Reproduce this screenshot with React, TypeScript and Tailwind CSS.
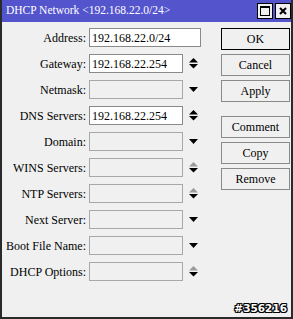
import React from 'react'

type Arrow = 'both' | 'down' | 'dimmed' | 'none'

interface Field {
  label: string
  value?: string
  enabled: boolean
  arrow: Arrow
  wide?: boolean
}

const fields: Field[] = [
  { label: 'Address:', value: '192.168.22.0/24', enabled: true, arrow: 'none', wide: true },
  { label: 'Gateway:', value: '192.168.22.254', enabled: true, arrow: 'both' },
  { label: 'Netmask:', enabled: false, arrow: 'down' },
  { label: 'DNS Servers:', value: '192.168.22.254', enabled: true, arrow: 'both' },
  { label: 'Domain:', enabled: false, arrow: 'down' },
  { label: 'WINS Servers:', enabled: false, arrow: 'dimmed' },
  { label: 'NTP Servers:', enabled: false, arrow: 'dimmed' },
  { label: 'Next Server:', enabled: false, arrow: 'down' },
  { label: 'Boot File Name:', enabled: false, arrow: 'down' },
  { label: 'DHCP Options:', enabled: false, arrow: 'dimmed' },
]

function ArrowIcon({ kind }: { kind: Arrow }) {
  if (kind === 'none') return null
  if (kind === 'down') {
    return (
      <svg width="9" height="11" viewBox="0 0 9 11">
        <polygon points="0,3 9,3 4.5,8" fill="#000" />
      </svg>
    )
  }
  return (
    <svg width="9" height="11" viewBox="0 0 9 11">
      <polygon points="4.5,0 0,4.5 9,4.5" fill={kind === 'dimmed' ? '#9a9a9a' : '#000'} />
      <polygon points="0,6 9,6 4.5,10.5" fill="#000" />
    </svg>
  )
}

function Btn({ label, primary }: { label: string; primary?: boolean }) {
  return (
    <div
      className={`h-[22px] w-[69px] flex items-center justify-center bg-[#f0f0f0] text-[12px] text-black ${
        primary ? 'border border-black' : 'border border-[#8a8a8a]'
      }`}
    >
      {label}
    </div>
  )
}

export default function App() {
  return (
    <div className="w-[293px] h-[319px] flex flex-col bg-[#f0f0f0] border-l-2 border-r-2 border-b-2 border-[#2a2a2a] overflow-hidden font-['Liberation_Serif','DejaVu_Serif',serif]">
      {/* title bar */}
      <div className="h-[22px] shrink-0 flex items-center bg-[#5454cc] pl-[6px] pr-[2px] -mx-[2px]">
        <span className="text-white text-[11.5px] leading-none flex-1">DHCP Network &lt;192.168.22.0/24&gt;</span>
        <div className="flex gap-[2px]">
          <div className="w-[16px] h-[16px] bg-[#f0f0f0] border border-black flex items-center justify-center">
            <div className="w-[10px] h-[10px] border border-black border-t-2" />
          </div>
          <div className="w-[16px] h-[16px] bg-[#f0f0f0] border border-black flex items-center justify-center">
            <svg width="8" height="8" viewBox="0 0 8 8">
              <path d="M1 1 L7 7 M7 1 L1 7" stroke="#000" strokeWidth="2" />
            </svg>
          </div>
        </div>
      </div>

      {/* body */}
      <div className="flex-1 flex flex-col pt-[6px]">
        <div className="flex">
          <div className="flex flex-col gap-[7px]">
            {fields.map((f) => (
              <div key={f.label} className="flex items-center h-[19px]">
                <div className="w-[87px] pr-[3px] text-right text-[12px] text-black whitespace-nowrap">{f.label}</div>
                <div
                  className={`h-[19px] border flex items-center pl-[2px] text-[12px] text-black ${
                    f.wide ? 'w-[112px]' : 'w-[94px]'
                  } ${f.enabled ? 'bg-white border-[#8a8a8a]' : 'bg-[#f0f0f0] border-[#a8a8a8]'}`}
                >
                  {f.value}
                </div>
                <div className="w-[20px] flex items-center justify-center">
                  <ArrowIcon kind={f.arrow} />
                </div>
              </div>
            ))}
          </div>
          <div className="flex flex-col ml-auto mr-[4px] gap-[4px]">
            <Btn label="OK" primary />
            <Btn label="Cancel" />
            <Btn label="Apply" />
            <div className="h-[6px]" />
            <Btn label="Comment" />
            <Btn label="Copy" />
            <Btn label="Remove" />
          </div>
        </div>
        <div className="mt-auto mb-[4px] mr-[4px] text-right text-[10.5px] font-bold text-white leading-none font-['DejaVu_Sans',sans-serif] [text-shadow:1px_0_#000,-1px_0_#000,0_1px_#000,0_-1px_#000,1px_1px_#000,-1px_-1px_#000,1px_-1px_#000,-1px_1px_#000]">
          #356216
        </div>
      </div>
    </div>
  )
}
